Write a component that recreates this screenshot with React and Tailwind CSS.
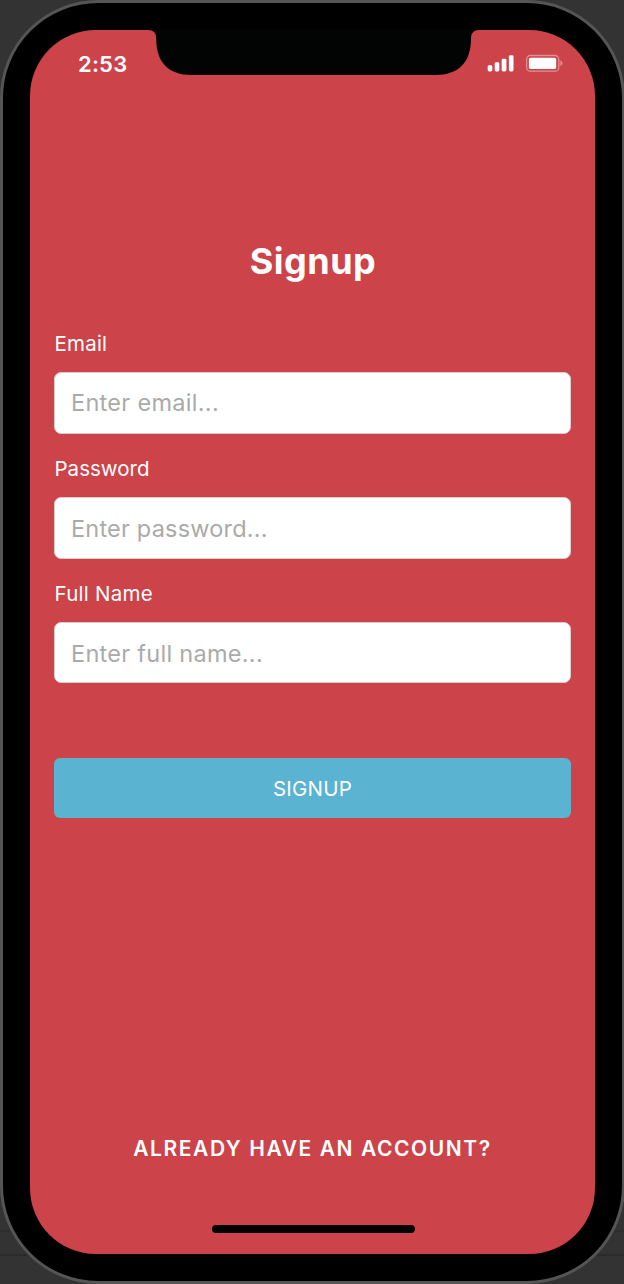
const FIELDS = [
  { label: "Email", placeholder: "Enter email...", type: "email", labelTracking: "tracking-[0.200px]", tracking: "tracking-[0.300px]", height: "h-[62px]", pad: "pb-0.5", gap: "mb-[21px]" },
  { label: "Password", placeholder: "Enter password...", type: "password", labelTracking: "tracking-[0.020px]", tracking: "tracking-[0.200px]", height: "h-[62px]", pad: "pb-0", gap: "mb-[21px]" },
  { label: "Full Name", placeholder: "Enter full name...", type: "text", labelTracking: "tracking-[0.250px]", tracking: "tracking-[0.280px]", height: "h-[61px]", pad: "pt-0.5", gap: "mb-0" },
];

function Notch() {
  return (
    <svg className="absolute left-[114px] top-0 h-[46px] w-[340px]" viewBox="144 30 340 46" aria-hidden="true">
      <path
        d="M144 30H148C153.500 30 156.200 33 156.200 38.500C156.200 62 168 75 192 75H435C459 75 471 62 471 38.500C471 33 473.700 30 479.200 30H484V29H144Z"
        fill="#020403"
      />
    </svg>
  );
}

function Signal() {
  return (
    <svg className="h-[18px] w-[28px]" viewBox="487 54 28 18" fill="#fff" aria-hidden="true">
      <rect x="487.700" y="65.200" width="4.600" height="6.200" rx="1.400" />
      <rect x="494.700" y="62.200" width="4.600" height="9.200" rx="1.400" />
      <rect x="501.700" y="58.700" width="4.700" height="12.700" rx="1.400" />
      <rect x="508.900" y="55.200" width="4.600" height="16.200" rx="1.400" />
    </svg>
  );
}

function Battery() {
  return (
    <svg className="h-[18px] w-[38px]" viewBox="526 54 38 18" fill="none" aria-hidden="true">
      <rect x="526.600" y="55.500" width="32.200" height="15.700" rx="3.800" stroke="#fff" strokeOpacity="0.42" strokeWidth="1.300" />
      <rect x="528.900" y="57.700" width="27.300" height="11.300" rx="1.800" fill="#fff" />
      <path d="M560.400 60.600C563.200 62 563.200 64.700 560.400 66.100Z" fill="#fff" fillOpacity="0.42" />
    </svg>
  );
}

export default function App() {
  return (
    <div className="relative h-[1284px] w-[624px] overflow-hidden bg-[#333333] font-['Inter','Liberation_Sans',sans-serif]">
      <div className="absolute left-0 top-[1230px] h-[2px] w-full bg-[#2e2e2e]" />
      <div className="absolute left-0 top-[1254px] h-[2px] w-full bg-[#2b2b2b]" />
      <div className="relative h-[1284px] w-[625px] rounded-[98px] border-[3px] border-[#555555] bg-black p-[27px]">
        <div className="relative flex h-[1224px] w-[565px] flex-col overflow-hidden rounded-[66px] bg-[#cc4349] text-white">
          <Notch />
          <header className="flex h-[68px] items-center pl-[48px] pr-[31px]">
            <span className="text-[22px] font-semibold leading-none tracking-[0.2px]">2:53</span>
            <div className="mb-[2px] ml-auto flex items-center gap-[11px]">
              <Signal />
              <Battery />
            </div>
          </header>
          <main className="flex flex-1 flex-col px-6">
            <h1 className="mt-[141px] pl-px text-center text-[36px] font-bold leading-[44px] tracking-[0.500px]">Signup</h1>
            <form className="mt-[47px] flex flex-col">
              {FIELDS.map((field) => (
                <label key={field.label} className={`flex flex-col ${field.gap}`}>
                  <span className={`mb-[15px] pl-[0.500px] text-[20.500px] leading-[27px] ${field.labelTracking}`}>{field.label}</span>
                  <input
                    type={field.type}
                    placeholder={field.placeholder}
                    className={`w-full rounded-[7px] border-[1.500px] border-[#dacdcd] bg-white px-[16px] text-[23.500px] text-gray-700 outline-none placeholder:text-[#aaaaaa] ${field.height} ${field.pad} ${field.tracking}`}
                  />
                </label>
              ))}
              <button type="button" className="mt-[75px] h-[60px] rounded-[6px] bg-[#5ab3d0] pt-0.5 text-[20.500px] tracking-[0.200px]">
                SIGNUP
              </button>
            </form>
            <a className="mb-[92px] mt-auto text-center text-[21px] font-semibold leading-[26px] tracking-[1.570px]">
              ALREADY HAVE AN ACCOUNT?
            </a>
          </main>
          <div className="absolute bottom-[21px] left-[182px] h-[8px] w-[203px] rounded-[4px] bg-black" />
        </div>
      </div>
    </div>
  );
}
